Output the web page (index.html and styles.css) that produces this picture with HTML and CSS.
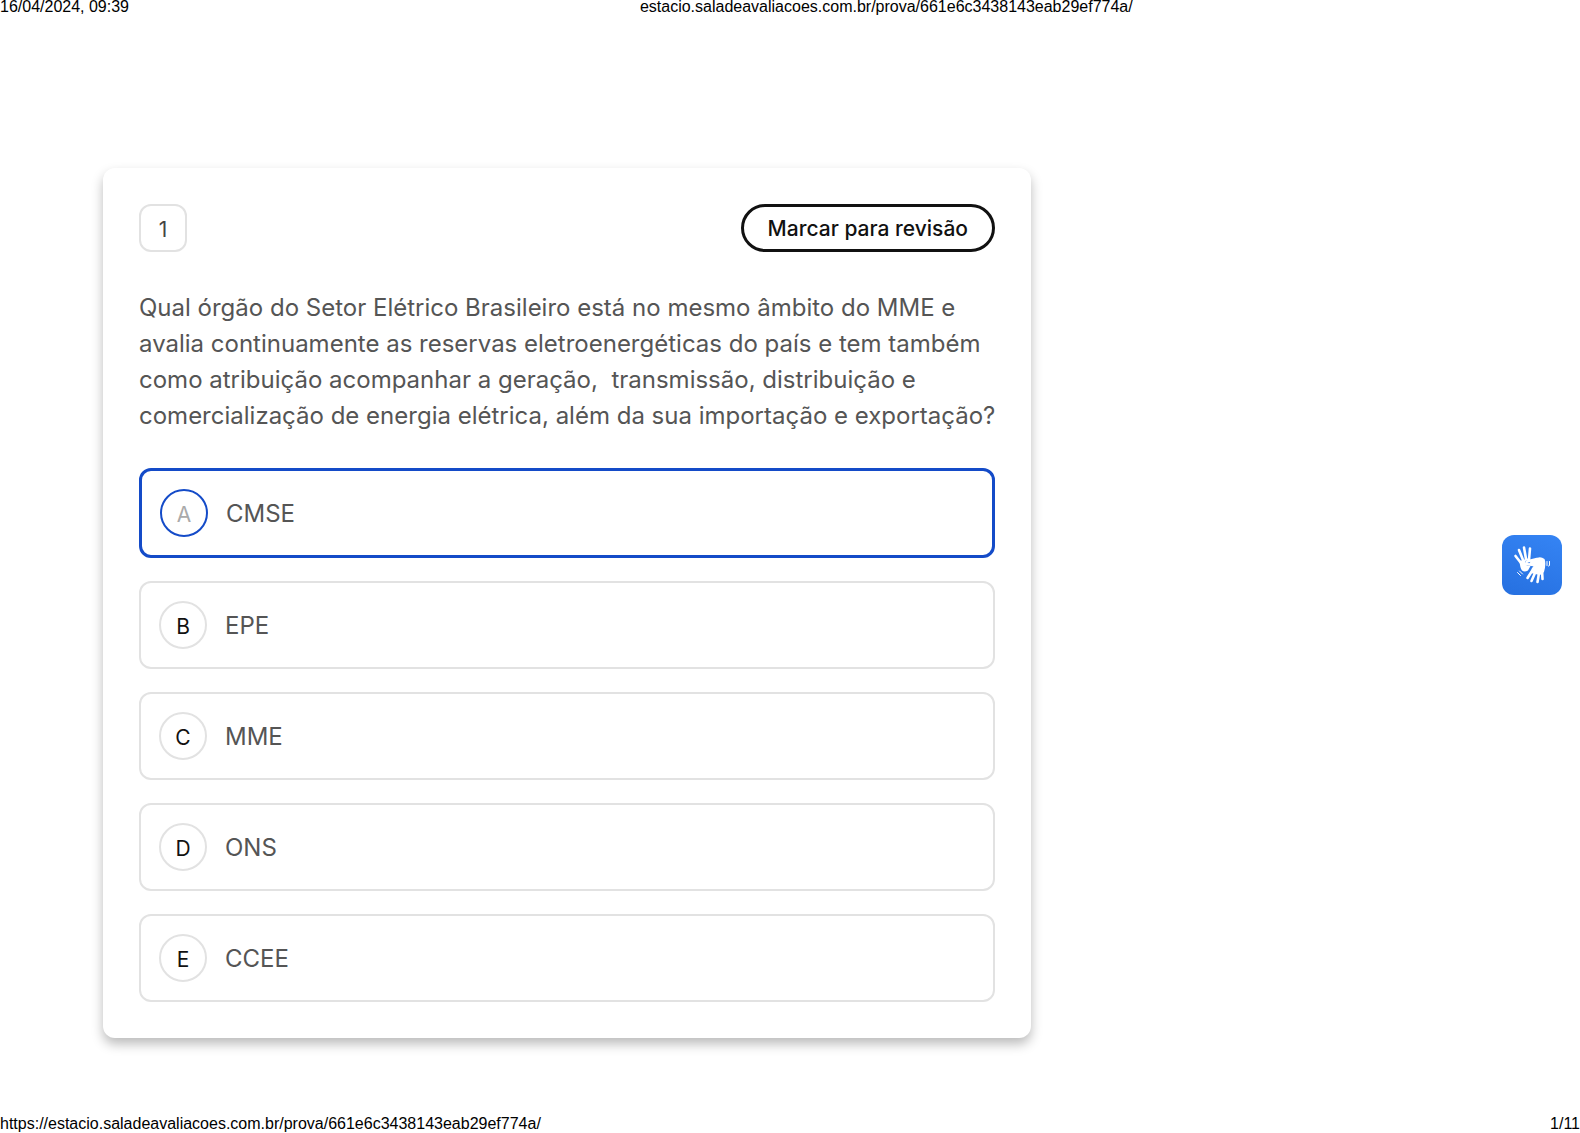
FILE: index.html
```html
<!DOCTYPE html>
<html lang="pt-BR">
<head>
    <meta charset="UTF-8">
    <meta name="viewport" content="width=device-width, initial-scale=1.0">
    <title>estacio.saladeavaliacoes.com.br/prova/661e6c3438143eab29ef774a/</title>
    <link rel="stylesheet" href="styles.css">
</head>
<body>
    <header class="print-header">
        <span>16/04/2024, 09:39</span>
        <span>estacio.saladeavaliacoes.com.br/prova/661e6c3438143eab29ef774a/</span>
    </header>

    <main class="page">
        <form class="card">
            <div class="card-top">
                <span class="number">1</span>
                <button type="button" class="review">Marcar para revisão</button>
            </div>

            <p class="question" id="question">Qual órgão do Setor Elétrico Brasileiro está no mesmo âmbito do MME e avalia continuamente as reservas eletroenergéticas do país e tem também como atribuição acompanhar a geração,&nbsp; transmissão, distribuição e comercialização de energia elétrica, além da sua importação e exportação?</p>

            <div class="options" role="radiogroup" aria-labelledby="question">
                <label class="option">
                    <input type="radio" name="answer" value="A" checked>
                    <span class="letter">A</span>
                    <span class="text">CMSE</span>
                </label>
                <label class="option">
                    <input type="radio" name="answer" value="B">
                    <span class="letter">B</span>
                    <span class="text">EPE</span>
                </label>
                <label class="option">
                    <input type="radio" name="answer" value="C">
                    <span class="letter">C</span>
                    <span class="text">MME</span>
                </label>
                <label class="option">
                    <input type="radio" name="answer" value="D">
                    <span class="letter">D</span>
                    <span class="text">ONS</span>
                </label>
                <label class="option">
                    <input type="radio" name="answer" value="E">
                    <span class="letter">E</span>
                    <span class="text">CCEE</span>
                </label>
            </div>
        </form>
    </main>

    <!-- Botão de Libras -->
    <button type="button" class="libras" aria-label="Libras">
        <svg viewBox="0 0 60 60" width="60" height="60" aria-hidden="true">
            <g fill="none" stroke="#fff" stroke-linecap="round" stroke-linejoin="round">
                <path stroke-width="2.6" d="M19 28L13.500 21M21 25L17 15M24 24L22 12.500M27 25L28 13.500"/>
                <path stroke-width="2.6" d="M30 36L25.500 43M33 38L29.500 46M37 38L35.500 47M40 35L40.500 44"/>
                <path stroke-width="2.600" d="M35 24L25 26.500L24 29L31 30"/>
                <path stroke-width="1" d="M15.500 37.500L18.500 40.500M17.500 36L20.500 39M45 26.500V30.500M47.500 26.500V30.500L46.500 31"/>
            </g>
            <path fill="#fff" d="M17.500 26L27.500 23L28.500 24.500L24 25.500Q21.500 28.500 25 30.500L28.500 31L26 35.500Q22.500 37.500 20 35.500Q18 33 17.500 26Z"/>
            <path fill="#fff" d="M33 24Q38 20.500 42.500 24Q44.500 28 42 37L38 40L28.500 38Q28.500 34 31.500 31L27 29L29 26Z"/>
        </svg>
    </button>

    <footer class="print-footer">
        <span>https://estacio.saladeavaliacoes.com.br/prova/661e6c3438143eab29ef774a/</span>
        <span>1/11</span>
    </footer>
</body>
</html>
```
FILE: styles.css
```css
* {
    box-sizing: border-box;
}

body {
    margin: 0;
    min-height: 100vh;
    display: flex;
    flex-direction: column;
    background-color: #fff;
    font-family: Inter, sans-serif;
}

.print-header,
.print-footer {
    font-family: "Liberation Sans", Arial, sans-serif;
    font-size: 16px;
    line-height: 13px;
    color: #000;
}

.print-header {
    display: grid;
    grid-template-columns: 81fr 119fr;
}

.print-footer {
    display: flex;
    justify-content: space-between;
    padding-bottom: 3px;
}

.page {
    flex: 1;
    padding: 155px 103px 60px;
}

.card {
    max-width: 928px;
    padding: 36px;
    border-radius: 12px;
    background-color: #fff;
    box-shadow: 0 6px 12px rgba(0, 0, 0, 0.27);
}

.card-top {
    display: flex;
    justify-content: space-between;
    align-items: center;
}

.number {
    width: 48px;
    height: 48px;
    border: 2px solid #e2e2e2;
    border-radius: 12px;
    font-size: 21px;
    line-height: 48px;
    text-align: center;
    color: #444;
}

.review {
    height: 48px;
    padding: 0 24px;
    border: 3px solid #111;
    border-radius: 24px;
    background-color: #fff;
    font-family: inherit;
    font-size: 21px;
    font-weight: 500;
    color: #111;
    cursor: pointer;
}

.question {
    margin: 38px -6px 34px 0;
    font-size: 24px;
    line-height: 36px;
    color: #555;
}

.options {
    display: flex;
    flex-direction: column;
    gap: 23px;
}

.option {
    position: relative;
    display: flex;
    align-items: center;
    gap: 18px;
    padding: 18px;
    border: 2px solid #e2e2e2;
    border-radius: 12px;
    font-size: 24px;
    line-height: 36px;
    color: #555;
    cursor: pointer;
}

.option input {
    position: absolute;
    opacity: 0;
    margin: 0;
}

.letter {
    width: 48px;
    height: 48px;
    border: 2px solid #e2e2e2;
    border-radius: 50%;
    font-size: 21px;
    line-height: 48px;
    text-align: center;
    color: #111;
}

.text {
    padding-top: 2px;
}

/* Alternativa marcada */
.option:has(input:checked) {
    border: 3px solid #144bc8;
}

.option input:checked + .letter {
    border-color: #144bc8;
    color: #aaa;
}

.libras {
    position: fixed;
    top: 535px;
    right: 18px;
    width: 60px;
    height: 60px;
    padding: 0;
    border: none;
    border-radius: 12px;
    background: linear-gradient(20deg, #2670e0, #3584f4);
    cursor: pointer;
}

.libras svg {
    display: block;
}
```
